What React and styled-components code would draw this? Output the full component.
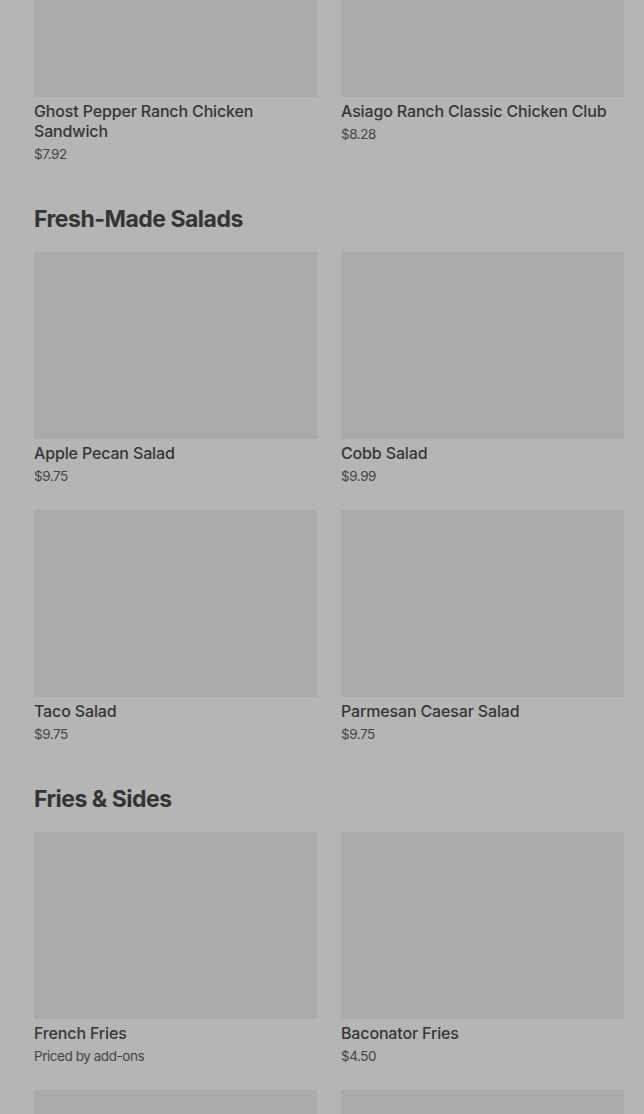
import React from "react";
import styled, { createGlobalStyle } from "styled-components";

const Global = createGlobalStyle`
  html, body { margin: 0; padding: 0; background: #b5b5b5; }
  body { font-family: Inter, "Noto Sans", Arial, sans-serif; overflow: hidden; }
`;

const Page = styled.main`
  margin-top: -90px;
  padding: 0 20px 0 34px;
  display: flex;
  flex-direction: column;
`;

const Section = styled.section`
  display: flex;
  flex-direction: column;
  & + & { margin-top: 39px; }
`;

const Heading = styled.h2`
  margin: 0 0 16px;
  font-size: 23px;
  line-height: 33px;
  font-weight: 700;
  letter-spacing: -0.5px;
  color: #343434;
`;

const Grid = styled.div`
  display: grid;
  grid-template-columns: 283px 283px;
  column-gap: 24px;
  row-gap: 24px;
`;

const Card = styled.div`
  display: flex;
  flex-direction: column;
`;

const Img = styled.div`
  height: 187px;
  background: #aaaaaa;
`;

const Title = styled.div`
  margin-top: 4px;
  font-size: 16px;
  line-height: 20px;
  font-weight: 500;
  color: #363636;
  letter-spacing: -0.15px;
`;

const Price = styled.div`
  margin-top: 3px;
  font-size: 13.5px;
  line-height: 20px;
  color: #444444;
  letter-spacing: -0.45px;
`;

const sections = [
  {
    title: null,
    items: [
      ["Ghost Pepper Ranch Chicken Sandwich", "$7.92"],
      ["Asiago Ranch Classic Chicken Club", "$8.28"],
    ],
  },
  {
    title: "Fresh-Made Salads",
    items: [
      ["Apple Pecan Salad", "$9.75"],
      ["Cobb Salad", "$9.99"],
      ["Taco Salad", "$9.75"],
      ["Parmesan Caesar Salad", "$9.75"],
    ],
  },
  {
    title: "Fries & Sides",
    items: [
      ["French Fries", "Priced by add-ons"],
      ["Baconator Fries", "$4.50"],
      ["Chili", "$3.99"],
      ["Plain Baked Potato", "$2.49"],
    ],
  },
];

export default function App() {
  return (
    <>
      <Global />
      <Page>
        {sections.map((s, i) => (
          <Section key={i}>
            {s.title && <Heading>{s.title}</Heading>}
            <Grid>
              {s.items.map(([t, p]) => (
                <Card key={t}>
                  <Img />
                  <Title>{t}</Title>
                  <Price>{p}</Price>
                </Card>
              ))}
            </Grid>
          </Section>
        ))}
      </Page>
    </>
  );
}
